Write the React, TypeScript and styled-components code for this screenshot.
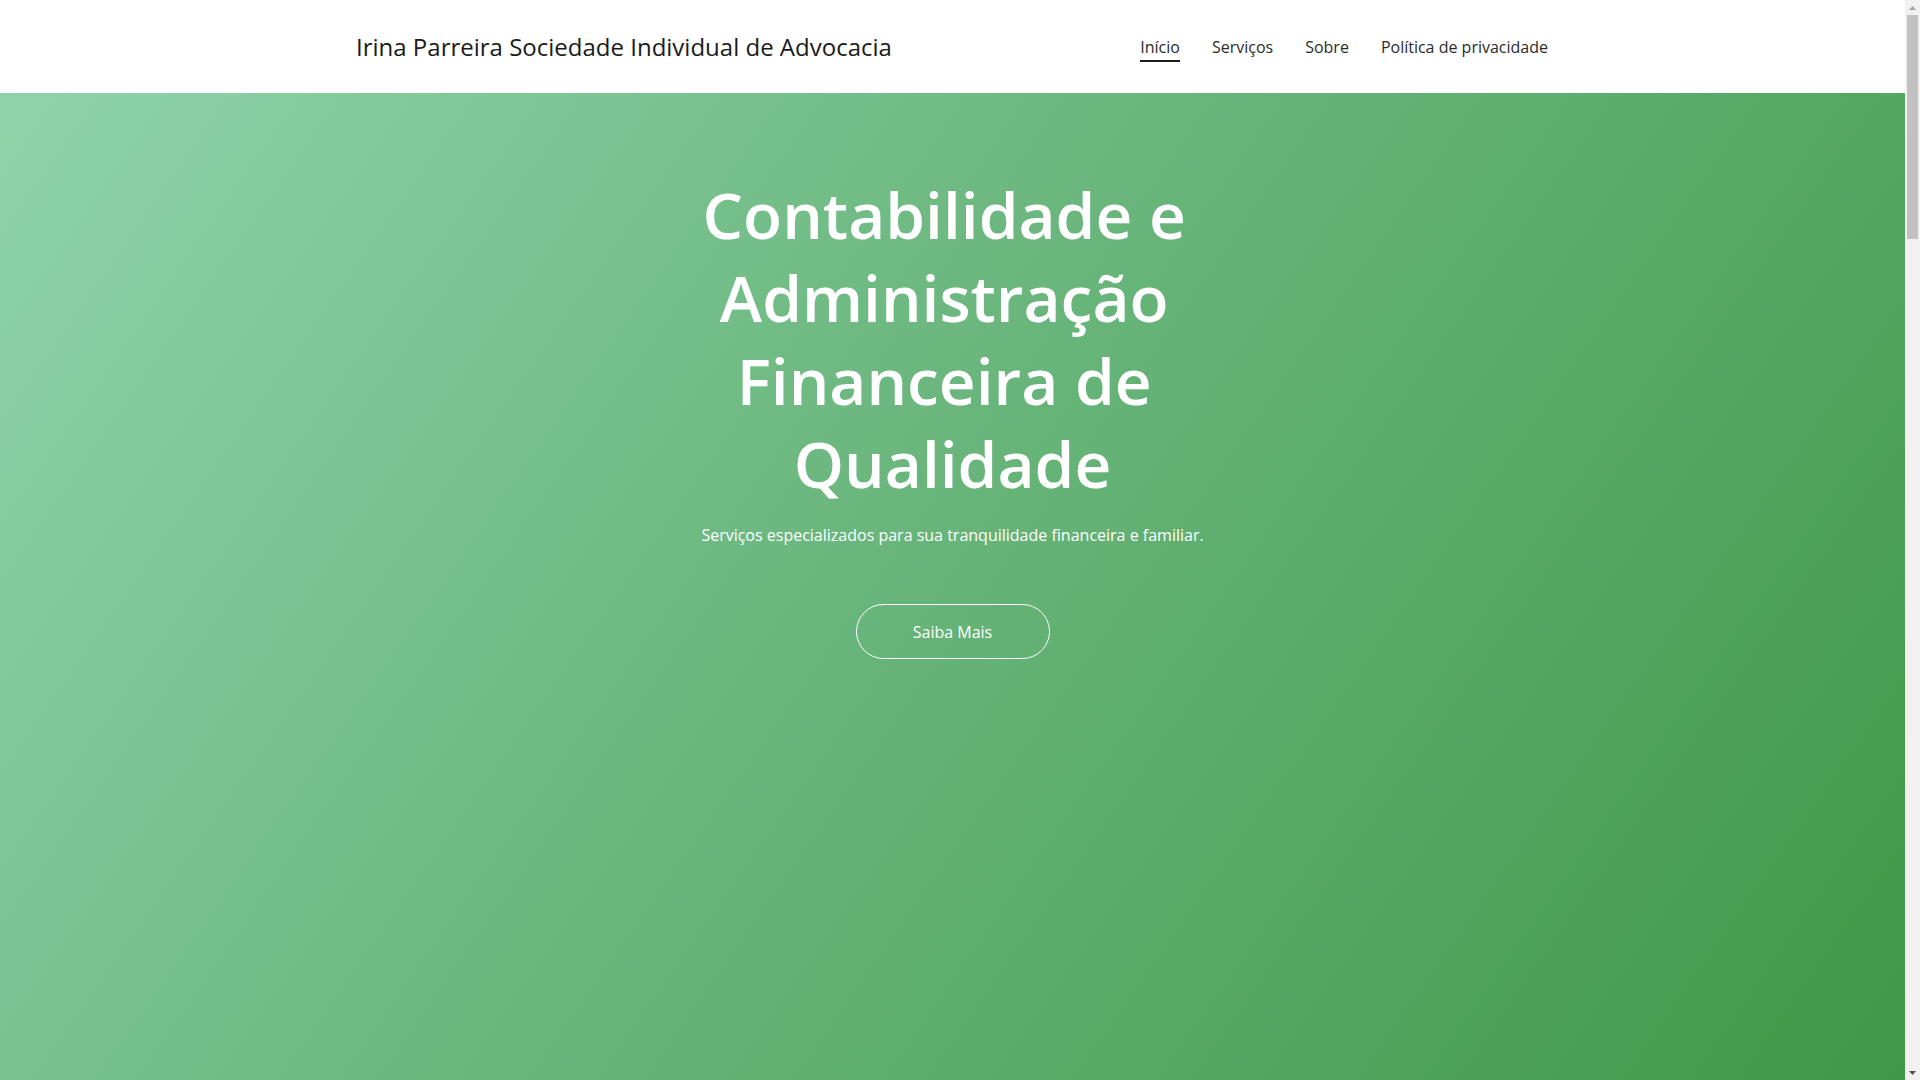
import React from "react";
import styled, {createGlobalStyle} from "styled-components";

const GlobalStyle = createGlobalStyle`
  html, body {
    margin: 0;
    padding: 0;
  }
  body {
    font-family: "Open Sans", "Noto Sans", "Liberation Sans", sans-serif;
    color: #1b1b1b;
    background: #ffffff;
  }
  * {
    box-sizing: border-box;
  }
`

// window: the page itself plus the browser's scrollbar at the right
const Viewport = styled.div`
  display: flex;
  height: 100vh;
  overflow: hidden;
`

const Page = styled.div`
  flex: 1;
  display: flex;
  flex-direction: column;
  overflow: hidden;
`

const Header = styled.header`
  flex-shrink: 0;
  height: 93px;
  background: #ffffff;
  display: flex;
  align-items: center;
  justify-content: space-between;
  padding: 0 357px 0 356px;
`

const Logo = styled.a`
  font-size: 24px;
  color: #1b1b1b;
  text-decoration: none;
  line-height: 1;
`

const Nav = styled.nav`
  display: flex;
  align-items: center;
  gap: 32px;
  padding-top: 5px;
`

const NavLink = styled.a<{ $active?: boolean }>`
  font-size: 16px;
  color: #2b2b2b;
  text-decoration: none;
  padding: 2px 0 3px;
  border-bottom: 2px solid ${p => p.$active ? "#1b1b1b" : "transparent"};
  line-height: 1.2;
`

const Hero = styled.section`
  flex: 1;
  background: linear-gradient(125deg, #90d3aa 0%, #6ab67d 45%, #3f9847 100%);
  display: flex;
  flex-direction: column;
  align-items: center;
  padding-top: 80px;
  color: #ffffff;
  text-align: center;
`

const Title = styled.h1`
  margin: 0;
  max-width: 520px;
  font-size: 64px;
  line-height: 83px;
  font-weight: 600;
  white-space: break-spaces;
`

const Subtitle = styled.p`
  margin: 17px 0 0;
  font-size: 16px;
  line-height: 26px;
`

const CtaButton = styled.a`
  margin-top: 56px;
  width: 194px;
  height: 55px;
  border: 1px solid #ffffff;
  border-radius: 28px;
  display: flex;
  align-items: center;
  justify-content: center;
  color: #ffffff;
  font-size: 16px;
  text-decoration: none;
`

const Scrollbar = styled.div`
  width: 15px;
  flex-shrink: 0;
  background: #f1f1f1;
  display: flex;
  flex-direction: column;
`

const ScrollArrow = styled.div<{ $dark?: boolean }>`
  height: 15px;
  display: flex;
  align-items: center;
  justify-content: center;

  svg {
    fill: ${p => p.$dark ? "#505050" : "#a3a3a3"};
  }
`

const Track = styled.div`
  flex: 1;
  padding: 0 2px;
`

const Thumb = styled.div`
  height: 224px;
  background: #c1c1c1;
`

const pages = [
  {title: "Início", url: "#inicio", active: true},
  {title: "Serviços", url: "#servicos"},
  {title: "Sobre", url: "#sobre"},
  {title: "Política de privacidade", url: "#privacidade"},
];

const App = () => {
  return (
    <>
      <GlobalStyle/>
      <Viewport>
        <Page>
          <Header>
            <Logo href="#inicio">Irina Parreira Sociedade Individual de Advocacia</Logo>
            <Nav>
              {pages.map(page => (
                <NavLink key={page.url} href={page.url} $active={page.active}>
                  {page.title}
                </NavLink>
              ))}
            </Nav>
          </Header>
          <Hero id="inicio">
            <Title>Contabilidade e Administração Financeira de Qualidade</Title>
            <Subtitle>Serviços especializados para sua tranquilidade financeira e familiar.</Subtitle>
            <CtaButton href="#servicos">Saiba Mais</CtaButton>
          </Hero>
        </Page>
        <Scrollbar>
          <ScrollArrow>
            <svg width="7" height="4" viewBox="0 0 7 4"><path d="M3.5 0 L7 4 L0 4 Z"/></svg>
          </ScrollArrow>
          <Track>
            <Thumb/>
          </Track>
          <ScrollArrow $dark>
            <svg width="7" height="4" viewBox="0 0 7 4"><path d="M0 0 L7 0 L3.5 4 Z"/></svg>
          </ScrollArrow>
        </Scrollbar>
      </Viewport>
    </>
  );
};

export default App;
